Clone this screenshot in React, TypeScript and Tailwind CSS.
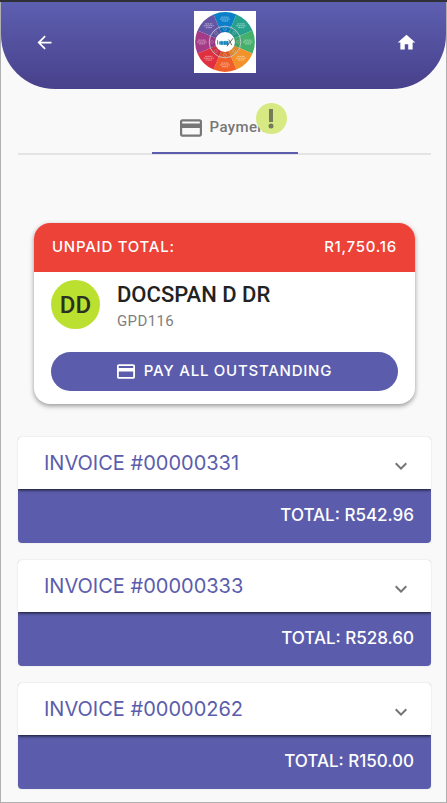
import React from "react";
import { MdArrowBack, MdHome, MdExpandMore } from "react-icons/md";

const invoices = [
  { id: "00000331", total: "R542.96" },
  { id: "00000333", total: "R528.60" },
  { id: "00000262", total: "R150.00" },
];

const segments = [
  "#0b80c9",
  "#26a18e",
  "#45b06b",
  "#f3922a",
  "#f15f28",
  "#e0303f",
  "#a53a86",
  "#6556a5",
];

const wedge = "M50 50 L31.6 5.6 A48 48 0 0 1 68.4 5.6 Z";

function WheelLogo() {
  return (
    <svg viewBox="0 0 100 100" className="size-[62px] bg-white" role="img" aria-label="Logo">
      {segments.map((color, i) => {
        const a = ((i * 45 - 90) * Math.PI) / 180;
        const x = 50 + 37 * Math.cos(a);
        const y = 50 + 37 * Math.sin(a);
        const ix = 50 + 21 * Math.cos(a);
        const iy = 50 + 21 * Math.sin(a);
        return (
          <g key={color}>
            <path d={wedge} fill={color} transform={`rotate(${i * 45} 50 50)`} />
            <path
              d={`M${x - 6} ${y - 3}h12M${x - 8} ${y}h16M${x - 5} ${y + 3}h10`}
              stroke="#fff"
              strokeWidth="1.3"
              strokeDasharray="3 0.7"
              opacity="0.6"
            />
            <circle cx={ix} cy={iy} r="2.4" fill="none" stroke="#fff" strokeWidth="1" opacity="0.4" />
          </g>
        );
      })}
      <circle cx="50" cy="50" r="25.5" fill="#20304a" fillOpacity="0.1" stroke="#c9ced6" strokeWidth="1.4" />
      <circle cx="50" cy="50" r="16" fill="#fff" />
      <path d="M38 47v7M41 49v5M43 49h3v5h-3zM48 49h3v5h-3zM52 49h3v5h-3z" fill="#1688bd" stroke="#1688bd" strokeWidth="1.4" />
      <path d="M53 57L63 44M56 46l5 9" stroke="#333" strokeWidth="1.2" />
    </svg>
  );
}

function CardIcon({ className }: { className: string }) {
  return (
    <svg viewBox="2 4 20 16" className={className} fill="currentColor" aria-hidden="true">
      <path d="M20 4H4c-1.11 0-1.99.89-1.99 2L2 18c0 1.11.89 2 2 2h16c1.11 0 2-.89 2-2V6c0-1.11-.89-2-2-2zm0 14H4v-6h16v6zm0-10H4V6h16v2z" />
    </svg>
  );
}

export default function App() {
  return (
    <div className="min-h-screen border-x border-b border-[#b0b0b0] bg-[#f9f9f9] pb-[13px] font-['Inter',sans-serif]">
      <div className="-mx-px h-0.5 bg-[#303038]" />
      <header className="flex h-[87px] items-center justify-between rounded-b-[54px] bg-linear-to-b from-[#5d5fb0] to-[#48418b] pr-7 pb-2 pl-[31px]">
        <button type="button" aria-label="Back" className="grid size-6 place-items-center pt-0.5 text-white">
          <MdArrowBack className="size-[21px]" />
        </button>
        <WheelLogo />
        <button type="button" aria-label="Home" className="grid size-6 place-items-center pt-0.5 text-white">
          <MdHome className="size-[21px]" />
        </button>
      </header>

      <main className="pr-[15px] pl-[17px]">
        <nav className="flex h-[66px] items-end justify-center border-b-2 border-[#e4e4e6]">
          <button
            type="button"
            className="relative -mb-px flex h-[53px] w-[146px] items-center justify-center gap-2 border-b-2 border-[#5b5cab] pt-0.5 pl-0.5 font-['Roboto',sans-serif] text-[15px] font-medium tracking-wide text-[#777]"
          >
            <CardIcon className="h-[18px] w-[22px] shrink-0" />
            Payment
            <span className="absolute top-0.5 right-[11px] grid size-[31px] place-items-center rounded-full bg-[#d7e982]">
              <svg viewBox="0 0 6 20" className="h-5 w-[6px] fill-[#747b5b]" role="img" aria-label="Attention">
                <path d="M1 0h4v13H1z" />
                <circle cx="3" cy="17" r="2.5" />
              </svg>
            </span>
          </button>
        </nav>

        <section className="mx-4 mt-[68px] overflow-hidden rounded-2xl bg-white shadow-[0_2px_5px_rgba(0,0,0,0.4)]">
          <div className="flex h-[49px] items-center justify-between bg-[#ed4237] px-[18px] text-[15px] font-medium tracking-wider text-white">
            <span>UNPAID TOTAL:</span>
            <span>R1,750.16</span>
          </div>
          <div className="px-[17px] pt-2 pb-[13px]">
            <div className="flex gap-[17px] font-['Roboto',sans-serif]">
              <div className="grid size-[49px] shrink-0 place-items-center rounded-full bg-[#bce02f] text-2xl font-medium text-[#2b3024]">
                DD
              </div>
              <div>
                <h1 className="text-[22px] leading-[30px] font-medium text-[#222]">DOCSPAN D DR</h1>
                <p className="text-[15px] leading-[22px] tracking-wide text-[#808080]">GPD116</p>
              </div>
            </div>
            <button
              type="button"
              className="mt-5 flex h-[39px] w-full items-center justify-center gap-[9px] rounded-full bg-[#5b5dac] text-[15px] font-medium tracking-wider text-white"
            >
              <CardIcon className="h-[15px] w-[18px]" />
              PAY ALL OUTSTANDING
            </button>
          </div>
        </section>

        <div className="mt-[33px] flex flex-col gap-[17px]">
          {invoices.map((invoice) => (
            <article key={invoice.id} className="overflow-hidden rounded shadow-[0_0_2px_rgba(0,0,0,0.12)]">
              <button
                type="button"
                className="relative flex h-[52px] w-full items-center justify-between bg-white pr-[18px] pl-[26px] text-[#5b5dac] shadow-[0_1px_3px_rgba(0,0,0,0.8)]"
              >
                <span className="text-xl">INVOICE #{invoice.id}</span>
                <MdExpandMore className="mt-1.5 size-6 text-[#757575]" />
              </button>
              <p className="flex h-[54px] items-center justify-end bg-[#5b5dac] pr-[17px] text-[17px] font-medium text-white">
                TOTAL: {invoice.total}
              </p>
            </article>
          ))}
        </div>
      </main>
    </div>
  );
}
